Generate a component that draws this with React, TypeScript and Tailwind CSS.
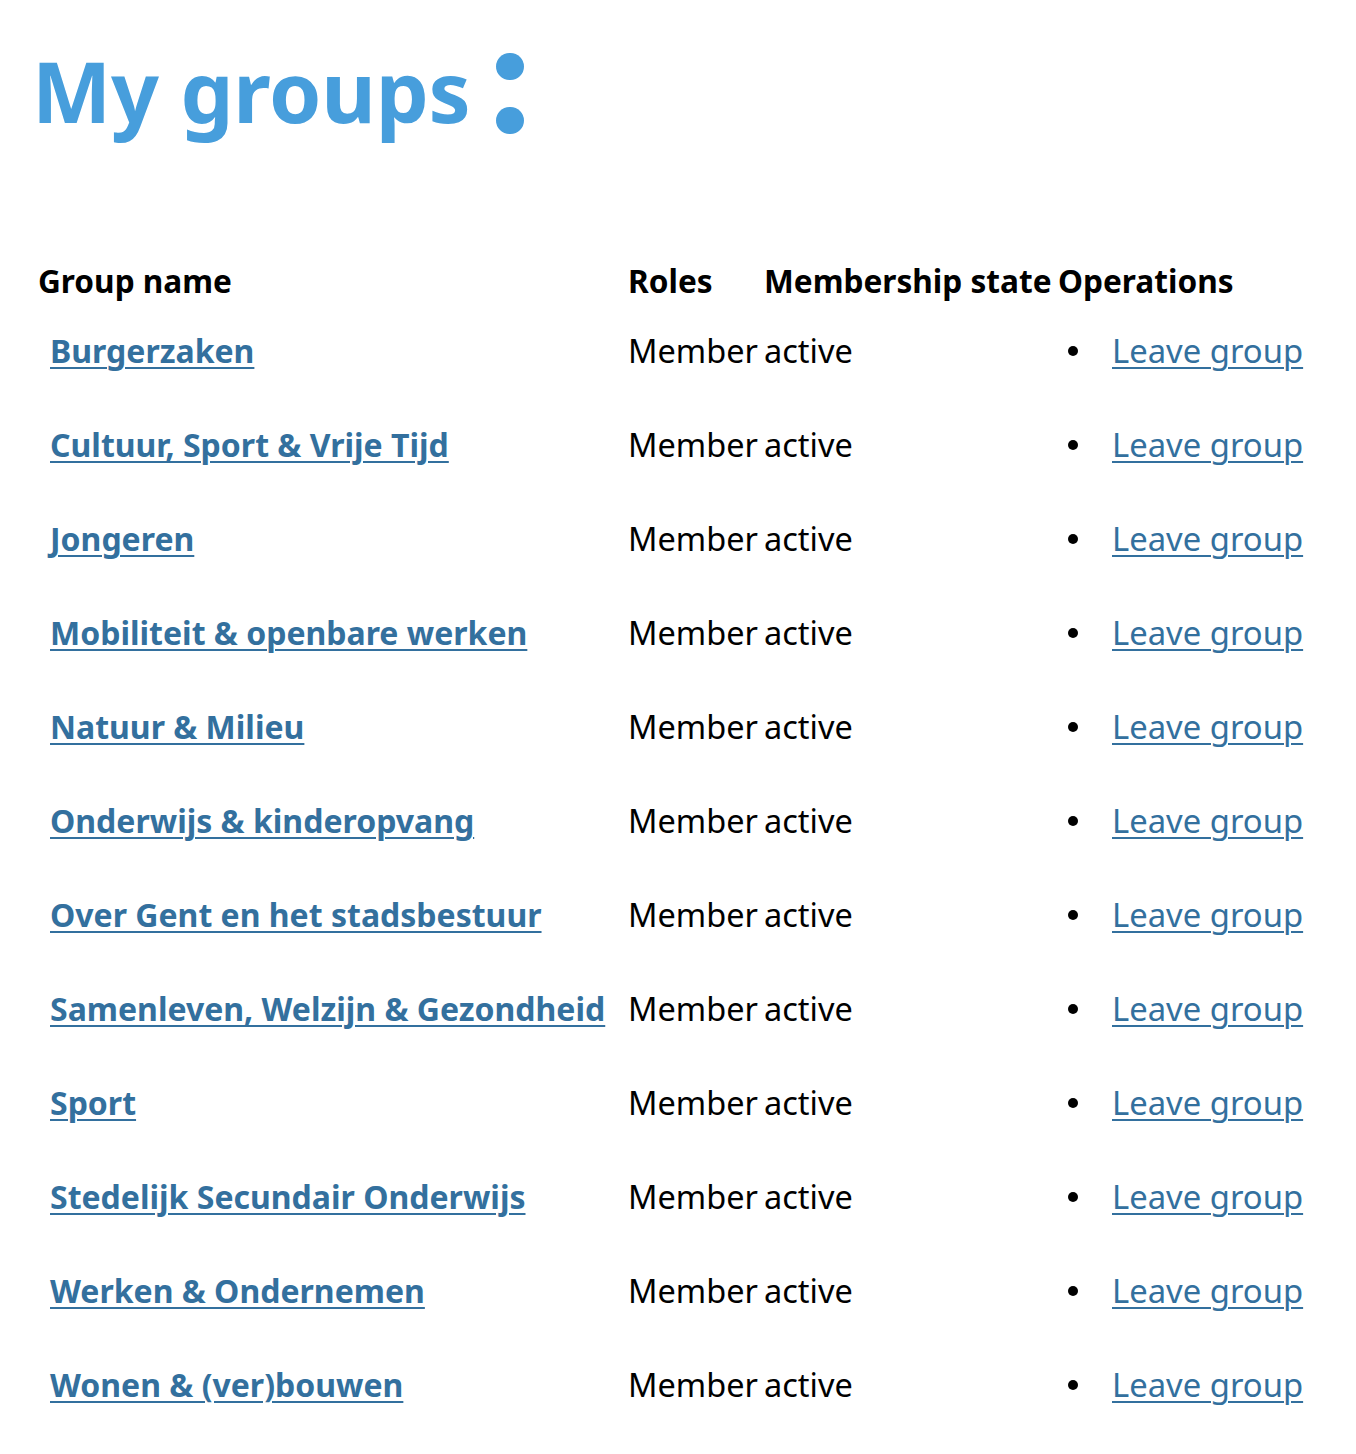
const groups = [
  'Burgerzaken',
  'Cultuur, Sport & Vrije Tijd',
  'Jongeren',
  'Mobiliteit & openbare werken',
  'Natuur & Milieu',
  'Onderwijs & kinderopvang',
  'Over Gent en het stadsbestuur',
  'Samenleven, Welzijn & Gezondheid',
  'Sport',
  'Stedelijk Secundair Onderwijs',
  'Werken & Ondernemen',
  'Wonen & (ver)bouwen',
];

export default function App() {
  return (
    <div className="min-h-[1454px] bg-white pl-[38px] pt-[49px] font-['Noto_Sans',sans-serif] text-black">
      <h1 className="-ml-[6px] flex items-start text-[84px] font-bold leading-none tracking-[-0.2px] text-[#479edc]">
        <span>My groups</span>
        <span className="ml-[25px] mt-[4px] flex flex-col gap-[27px]" aria-hidden>
          <span className="block h-[27px] w-[28px] rounded-full bg-[#479edc]" />
          <span className="block h-[27px] w-[28px] rounded-full bg-[#479edc]" />
        </span>
      </h1>

      <div className="mt-[124px] grid grid-cols-[590px_136px_294px_1fr]">
        <div className="flex h-[46px] items-center text-[31.6px] font-bold">Group name</div>
        <div className="flex h-[46px] items-center text-[31.6px] font-bold">Roles</div>
        <div className="flex h-[46px] items-center text-[31.6px] font-bold">Membership state</div>
        <div className="flex h-[46px] items-center text-[31.6px] font-bold">Operations</div>

        {groups.map((g) => (
          <div key={g} className="contents">
            <div className="flex h-[94px] items-center pl-[12px]">
              <a
                href="#"
                className="text-[32px] font-bold text-[#33709e] underline decoration-2 underline-offset-[4px]"
              >
                {g}
              </a>
            </div>
            <div className="flex h-[94px] items-center text-[32.5px]">Member</div>
            <div className="flex h-[94px] items-center text-[32.5px]">active</div>
            <ul className="flex h-[94px] items-center">
              <li className="flex items-center">
                <span className="ml-[10px] mr-[34px] block h-[10px] w-[10px] rounded-full bg-black" />
                <a
                  href="#"
                  className="text-[32.8px] text-[#33709e] underline decoration-2 underline-offset-[4px]"
                >
                  Leave group
                </a>
              </li>
            </ul>
          </div>
        ))}
      </div>
    </div>
  );
}
